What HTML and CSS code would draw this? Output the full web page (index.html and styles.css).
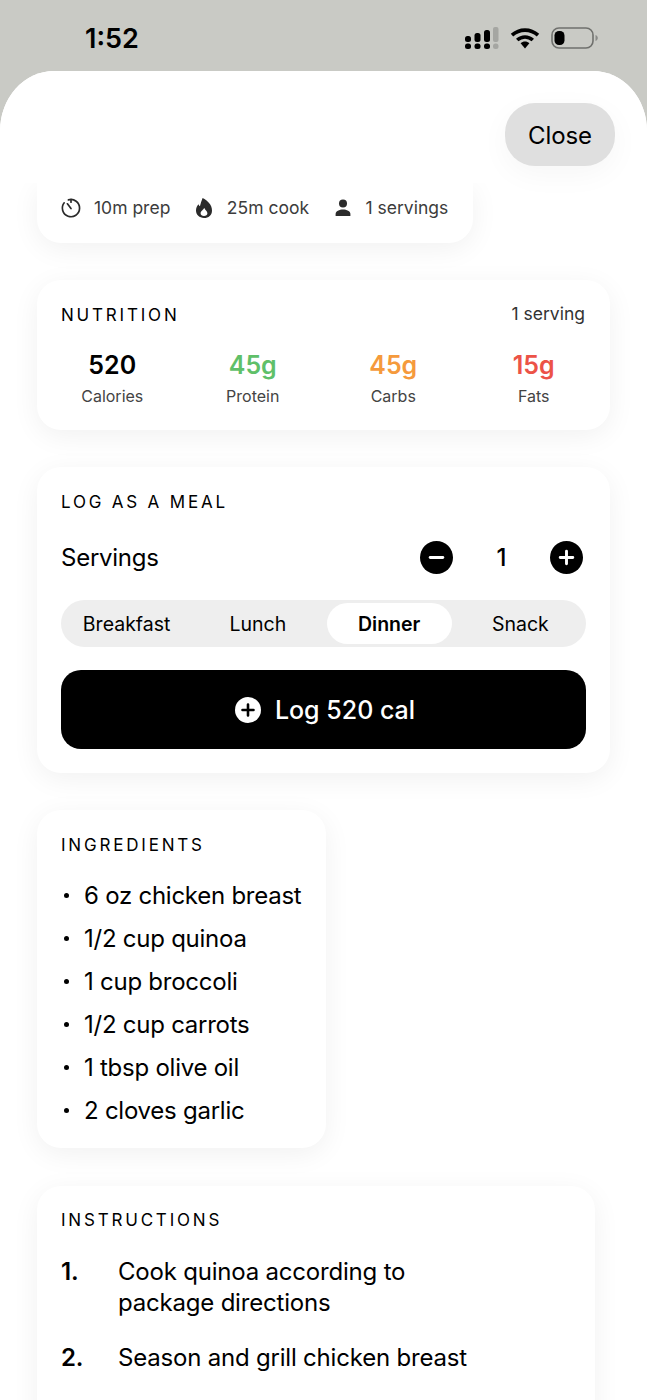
FILE: index.html
```html
<!DOCTYPE html>
<html lang="en">
<head>
    <meta charset="UTF-8">
    <meta name="viewport" content="width=device-width, initial-scale=1.0">
    <title>Recipe</title>
    <link rel="stylesheet" href="styles.css">
</head>
<body>
    <div class="status-bar">
        <span class="time">1:52</span>
        <div class="status-icons">
            <svg width="34" height="22" viewBox="0 0 34 22">
                <g fill="#000">
                    <rect x="0" y="9" width="6" height="6" rx="2.5"/>
                    <rect x="9.5" y="6" width="6" height="9" rx="2.5"/>
                    <rect x="19" y="3" width="6" height="12" rx="2.5"/>
                    <rect x="0" y="16.5" width="6" height="5.5" rx="2.5"/>
                    <rect x="9.5" y="16.5" width="6" height="5.5" rx="2.5"/>
                    <rect x="19" y="16.5" width="6" height="5.5" rx="2.5"/>
                </g>
                <g fill="#a5a6a2">
                    <rect x="28" y="0" width="5.5" height="15" rx="2"/>
                    <rect x="28" y="16.5" width="5.5" height="5.5" rx="2.5"/>
                </g>
            </svg>
            <svg width="30" height="22" viewBox="0 0 30 22">
                <g fill="none" stroke="#000" stroke-width="3.6">
                    <path d="M2 8.2C9.5 1.4 20.5 1.4 28 8.2"/>
                    <path d="M7.2 13C11.8 8.9 18.2 8.9 22.8 13"/>
                </g>
                <path d="M10.6 16.2C13.2 14 16.8 14 19.4 16.2L15 21.5Z" fill="#000"/>
            </svg>
            <svg width="47" height="22" viewBox="0 0 47 22">
                <rect x="1" y="1" width="41" height="20" rx="7" fill="none" stroke="#6f706d" stroke-width="1.6"/>
                <rect x="3.5" y="4" width="10" height="14" rx="4.5" fill="#000"/>
                <path d="M44.5 8C46 8.6 46.8 9.6 46.8 11S46 13.4 44.5 14Z" fill="#8a8b88"/>
            </svg>
        </div>
    </div>

    <div class="sheet">
        <div class="sheet-header">
            <button class="close-btn" type="button">Close</button>
        </div>

        <div class="scroll-area">
            <div class="card meta-card">
                <div class="meta-item">
                    <svg width="22" height="22" viewBox="0 0 22 22" fill="none" stroke="#2b2b2b" stroke-width="1.7" stroke-linecap="round">
                        <path d="M8.4 2.9A8.6 8.6 0 1 1 4.2 5.8"/>
                        <path d="M11 2.6V5.2"/>
                        <path d="M7.4 6.8L11 11.6"/>
                    </svg>
                    <span>10m prep</span>
                </div>
                <div class="meta-item">
                    <svg width="22" height="22" viewBox="0 0 22 22">
                        <path fill="#2b2b2b" fill-rule="evenodd" d="M9.6 1C14.8 3.6 19 8 19 13.4C19 18 15.6 21 11 21C6.4 21 3 18 3 13.6C3 11 4 8.8 5.6 7.2C5.8 8.2 6.2 8.9 6.9 9.3C7.6 6.2 8.6 3.4 9.6 1ZM11.2 10.8C10.6 12.8 7.6 14 7.6 16.3C7.6 18 9.1 19.1 11 19.1C12.9 19.1 14.4 18 14.4 16.3C14.4 14 11.8 12.8 11.2 10.8Z"/>
                    </svg>
                    <span>25m cook</span>
                </div>
                <div class="meta-item">
                    <svg width="22" height="22" viewBox="0 0 22 22" fill="#2b2b2b">
                        <circle cx="11" cy="6.6" r="4"/>
                        <path d="M3.6 19V17C3.6 14 7.4 12.4 11 12.4S18.4 14 18.4 17V19Z"/>
                    </svg>
                    <span>1 servings</span>
                </div>
            </div>

            <div class="card nutrition-card">
                <div class="card-head">
                    <h2 class="card-title">NUTRITION</h2>
                    <span class="serving-note">1 serving</span>
                </div>
                <div class="macros">
                    <div class="macro">
                        <div class="macro-value">520</div>
                        <div class="macro-label">Calories</div>
                    </div>
                    <div class="macro">
                        <div class="macro-value protein">45g</div>
                        <div class="macro-label">Protein</div>
                    </div>
                    <div class="macro">
                        <div class="macro-value carbs">45g</div>
                        <div class="macro-label">Carbs</div>
                    </div>
                    <div class="macro">
                        <div class="macro-value fats">15g</div>
                        <div class="macro-label">Fats</div>
                    </div>
                </div>
            </div>

            <div class="card">
                <h2 class="card-title">LOG AS A MEAL</h2>
                <div class="servings-row">
                    <span class="servings-label">Servings</span>
                    <div class="stepper">
                        <svg width="33" height="33" viewBox="0 0 34 34">
                            <circle cx="17" cy="17" r="17" fill="#000"/>
                            <path d="M10.5 17H23.5" stroke="#fff" stroke-width="3" stroke-linecap="round"/>
                        </svg>
                        <span class="stepper-value">1</span>
                        <svg width="33" height="33" viewBox="0 0 34 34">
                            <circle cx="17" cy="17" r="17" fill="#000"/>
                            <path d="M10.5 17H23.5M17 10.5V23.5" stroke="#fff" stroke-width="3" stroke-linecap="round"/>
                        </svg>
                    </div>
                </div>
                <div class="meal-tabs">
                    <div class="meal-tab">Breakfast</div>
                    <div class="meal-tab">Lunch</div>
                    <div class="meal-tab active">Dinner</div>
                    <div class="meal-tab">Snack</div>
                </div>
                <button class="log-btn" type="button">
                    <svg width="26" height="26" viewBox="0 0 26 26">
                        <circle cx="13" cy="13" r="13" fill="#fff"/>
                        <path d="M7.5 13H18.5M13 7.5V18.5" stroke="#000" stroke-width="2.6" stroke-linecap="round"/>
                    </svg>
                    <span>Log 520 cal</span>
                </button>
            </div>

            <div class="card fit-card">
                <h2 class="card-title">INGREDIENTS</h2>
                <ul class="ingredients">
                    <li>6 oz chicken breast</li>
                    <li>1/2 cup quinoa</li>
                    <li>1 cup broccoli</li>
                    <li>1/2 cup carrots</li>
                    <li>1 tbsp olive oil</li>
                    <li>2 cloves garlic</li>
                </ul>
            </div>

            <div class="card instructions-card">
                <h2 class="card-title">INSTRUCTIONS</h2>
                <div class="step">
                    <span class="step-num">1.</span>
                    <span>Cook quinoa according to<br>package directions</span>
                </div>
                <div class="step">
                    <span class="step-num">2.</span>
                    <span>Season and grill chicken breast</span>
                </div>
            </div>
        </div>
    </div>
</body>
</html>
```

FILE: styles.css
```css
* {
    box-sizing: border-box;
}
html, body {
    margin: 0;
    height: 1400px;
    overflow: hidden;
}
body {
    font-family: Inter, "Liberation Sans", sans-serif;
    background: #c9cac5;
    color: #000;
}
.status-bar {
    height: 71px;
    display: flex;
    justify-content: space-between;
    padding: 21px 49px 0 85px;
}
.time {
    font-size: 27px;
    font-weight: 600;
    line-height: 36px;
}
.status-icons {
    display: flex;
    align-items: flex-start;
    gap: 11px;
    padding-top: 6px;
}
.sheet {
    height: 1329px;
    background: #fff;
    border-radius: 54px 54px 0 0 / 60px 60px 0 0;
    overflow: hidden;
}
.sheet-header {
    position: relative;
    z-index: 1;
    height: 112px;
    display: flex;
    justify-content: flex-end;
    padding: 32px 32px 0 0;
    background: #fff;
}
.close-btn {
    width: 110px;
    height: 63px;
    padding: 2px 0 0;
    border: none;
    border-radius: 30px;
    background: #dfdfdf;
    color: #000;
    font-family: inherit;
    font-size: 24px;
    letter-spacing: -0.1px;
    box-shadow: 0 8px 30px rgba(0, 0, 0, 0.04);
}
.scroll-area {
    height: 1217px;
    overflow: hidden;
    padding: 0 37px;
    display: flex;
    flex-direction: column;
    align-items: flex-start;
    gap: 37px;
}
.card {
    width: 573px;
    background: #fff;
    border-radius: 24px;
    padding: 24px;
    box-shadow: 0 6px 28px rgba(0, 0, 0, 0.06);
}
.meta-card {
    width: 436px;
    height: 60px;
    flex: none;
    border-radius: 0 0 24px 24px;
    padding: 0 0 0 23px;
    display: flex;
    align-items: flex-start;
    gap: 22.5px;
}
.meta-item {
    display: flex;
    align-items: center;
    gap: 12px;
    height: 49px;
    font-size: 17.5px;
    color: #3c3c3c;
    white-space: nowrap;
}
.nutrition-card {
    padding-bottom: 23px;
}
.card-title {
    margin: 0;
    font-size: 17px;
    font-weight: 400;
    letter-spacing: 2.8px;
    line-height: 22px;
}
.card-head {
    display: flex;
    justify-content: space-between;
    align-items: center;
}
.serving-note {
    font-size: 17.5px;
    line-height: 20px;
    color: #333;
    margin-right: 1px;
    padding-bottom: 2px;
}
.macros {
    display: grid;
    grid-template-columns: repeat(4, 1fr);
    margin: 21px 0 0 -19px;
    width: 562px;
}
.macro {
    text-align: center;
}
.macro-value {
    font-size: 25px;
    font-weight: 600;
    line-height: 36px;
}
.macro-value.protein {
    color: #5fc069;
}
.macro-value.carbs {
    color: #f59a3c;
}
.macro-value.fats {
    color: #ec5347;
}
.macro-label {
    font-size: 16px;
    color: #444;
    line-height: 22px;
    margin-top: 2px;
}
.servings-row {
    display: flex;
    justify-content: space-between;
    align-items: center;
    margin-top: 28px;
}
.servings-label {
    font-size: 24px;
    letter-spacing: -0.25px;
}
.stepper {
    display: flex;
    align-items: center;
    padding-right: 3px;
}
.stepper-value {
    width: 97px;
    text-align: center;
    font-size: 24px;
    font-weight: 500;
}
.meal-tabs {
    display: flex;
    height: 47px;
    margin-top: 26px;
    background: #eeeeee;
    border-radius: 24px;
}
.meal-tab {
    flex: 1;
    margin: 3px;
    display: flex;
    align-items: center;
    justify-content: center;
    font-size: 19.5px;
    border-radius: 21px;
}
.meal-tab.active {
    background: #fff;
    font-weight: 600;
}
.log-btn {
    width: 100%;
    height: 79px;
    margin-top: 23px;
    padding: 0 0 0 3px;
    border: none;
    border-radius: 20px;
    background: #000;
    color: #fff;
    font-family: inherit;
    font-size: 25px;
    font-weight: 500;
    display: flex;
    align-items: center;
    justify-content: center;
    gap: 14px;
}
.fit-card {
    width: 289px;
    padding-bottom: 16px;
}
.ingredients {
    list-style: none;
    margin: 18px 0 0;
    padding: 0;
}
.ingredients li {
    display: flex;
    align-items: center;
    gap: 15px;
    height: 43px;
    font-size: 24px;
    letter-spacing: -0.25px;
    white-space: nowrap;
}
.ingredients li::before {
    content: "";
    flex: none;
    width: 5px;
    height: 5px;
    margin-left: 3px;
    border-radius: 50%;
    background: #000;
}
.instructions-card {
    width: 558px;
    flex: none;
    height: 300px;
    margin-top: 1px;
    padding-top: 23px;
}
.step {
    display: flex;
    font-size: 24px;
    line-height: 31px;
    letter-spacing: -0.2px;
    margin-top: 25px;
}
.step + .step {
    margin-top: 24px;
}
.step-num {
    width: 57px;
    flex: none;
    font-weight: 600;
}
```
